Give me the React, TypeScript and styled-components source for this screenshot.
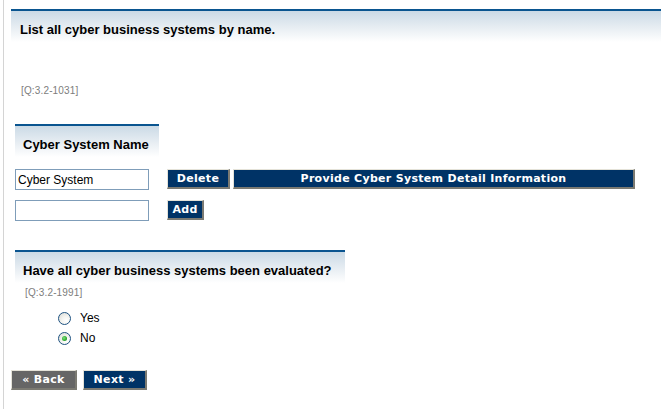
import * as React from 'react';
import styled, { createGlobalStyle } from 'styled-components';

const GlobalStyle = createGlobalStyle`
  html, body {
    margin: 0;
    padding: 0;
    background: #fff;
  }
  body {
    font-family: 'Liberation Sans', Arial, sans-serif;
    font-size: 12px;
    color: #000;
  }
`;

const Frame = styled.div`
  margin-left: 3px;
  border-left: 1px solid #d4d4d4;
  min-height: 409px;
  box-sizing: border-box;
  padding: 9px 0 0 7px;
`;

const SectionHeader = styled.div<{ $width?: number }>`
  width: ${(props) => (props.$width ? `${props.$width}px` : 'auto')};
  border-top: 2px solid #0a5590;
  background: linear-gradient(to bottom, #cbdae6 0%, #e8eef3 55%, #ffffff 100%);
  box-sizing: border-box;
  height: 33px;
  padding: 11px 0 0 ${(props) => (props.$width ? 8 : 9)}px;
  font-weight: bold;
  font-size: 13px;
  line-height: 15px;
  white-space: nowrap;
`;

const QuestionCode = styled.div<{ $top: number; $left: number }>`
  margin-top: ${(props) => props.$top}px;
  padding-left: ${(props) => props.$left}px;
  font-size: 10px;
  letter-spacing: 0.15px;
  line-height: 12px;
  color: #7d7d7d;
`;

const Block = styled.div<{ $top: number }>`
  margin-top: ${(props) => props.$top}px;
  margin-left: 4px;
`;

const Rows = styled.div`
  display: flex;
  flex-direction: column;
  gap: 10px;
  margin-top: 12px;
`;

const Row = styled.div`
  display: flex;
  align-items: flex-start;
  height: 21px;
`;

const NameInput = styled.input`
  width: 134px;
  height: 21px;
  box-sizing: border-box;
  border: 1px solid #7f9db9;
  padding: 0 2px;
  margin: 0 18px 0 0;
  font-family: 'Liberation Sans', Arial, sans-serif;
  font-size: 12px;
  color: #000;
  outline: none;
`;

const Button = styled.button<{ $width: number; $tone?: 'navy' | 'grey' }>`
  width: ${(props) => props.$width}px;
  height: 20px;
  box-sizing: border-box;
  margin: 0;
  padding: 0;
  border-width: 1px 2px 2px 1px;
  border-style: solid;
  border-color: #e4e2d8 #7b7a72 #7b7a72 #e4e2d8;
  background: ${(props) => (props.$tone === 'grey' ? '#666666' : '#003366')};
  color: #fff;
  font-family: 'DejaVu Sans', Verdana, sans-serif;
  font-weight: bold;
  font-size: 11px;
  letter-spacing: 0.3px;
  line-height: 16px;
  text-align: center;
  white-space: nowrap;
  cursor: pointer;
`;

const ButtonGroup = styled.div`
  display: flex;
  gap: 3px;
`;

const Options = styled.div`
  display: flex;
  flex-direction: column;
  margin-top: 9px;
  padding-left: 43px;
`;

const Option = styled.label`
  display: flex;
  align-items: center;
  height: 20px;
  gap: 9px;
  font-size: 12px;
`;

const Radio = styled.input`
  appearance: none;
  width: 13px;
  height: 13px;
  margin: 0;
  border-radius: 50%;
  border: 1px solid #1d5281;
  background: radial-gradient(circle at 65% 70%, #ffffff 0%, #f4f4f0 40%, #d8d8d2 100%);
  box-sizing: border-box;
  position: relative;

  &:checked::after {
    content: '';
    position: absolute;
    left: 3px;
    top: 3px;
    width: 5px;
    height: 5px;
    border-radius: 50%;
    background: radial-gradient(circle at 40% 40%, #7ee07e 0%, #2ea82e 60%, #1a7f1a 100%);
  }
`;

const Nav = styled.div`
  display: flex;
  gap: 6px;
  margin-top: 22px;
`;

export default function App() {
  const [evaluated, setEvaluated] = React.useState('no');

  return (
    <>
      <GlobalStyle />
      <Frame>
        <SectionHeader>List all cyber business systems by name.</SectionHeader>
        <QuestionCode $top={43} $left={10}>
          [Q:3.2-1031]
        </QuestionCode>

        <Block $top={27}>
          <SectionHeader $width={144}>Cyber System Name</SectionHeader>
          <Rows>
            <Row>
              <NameInput defaultValue="Cyber System" />
              <ButtonGroup>
                <Button $width={63}>Delete</Button>
                <Button $width={402}>Provide Cyber System Detail Information</Button>
              </ButtonGroup>
            </Row>
            <Row>
              <NameInput defaultValue="" />
              <Button $width={37}>Add</Button>
            </Row>
          </Rows>
        </Block>

        <Block $top={29}>
          <SectionHeader $width={330}>
            Have all cyber business systems been evaluated?
          </SectionHeader>
          <QuestionCode $top={4} $left={10}>
            [Q:3.2-1991]
          </QuestionCode>
          <Options>
            <Option>
              <Radio
                type="radio"
                name="evaluated"
                checked={evaluated === 'yes'}
                onChange={() => setEvaluated('yes')}
              />
              Yes
            </Option>
            <Option>
              <Radio
                type="radio"
                name="evaluated"
                checked={evaluated === 'no'}
                onChange={() => setEvaluated('no')}
              />
              No
            </Option>
          </Options>
        </Block>

        <Nav>
          <Button $width={66} $tone="grey">« Back</Button>
          <Button $width={64}>Next »</Button>
        </Nav>
      </Frame>
    </>
  );
}
